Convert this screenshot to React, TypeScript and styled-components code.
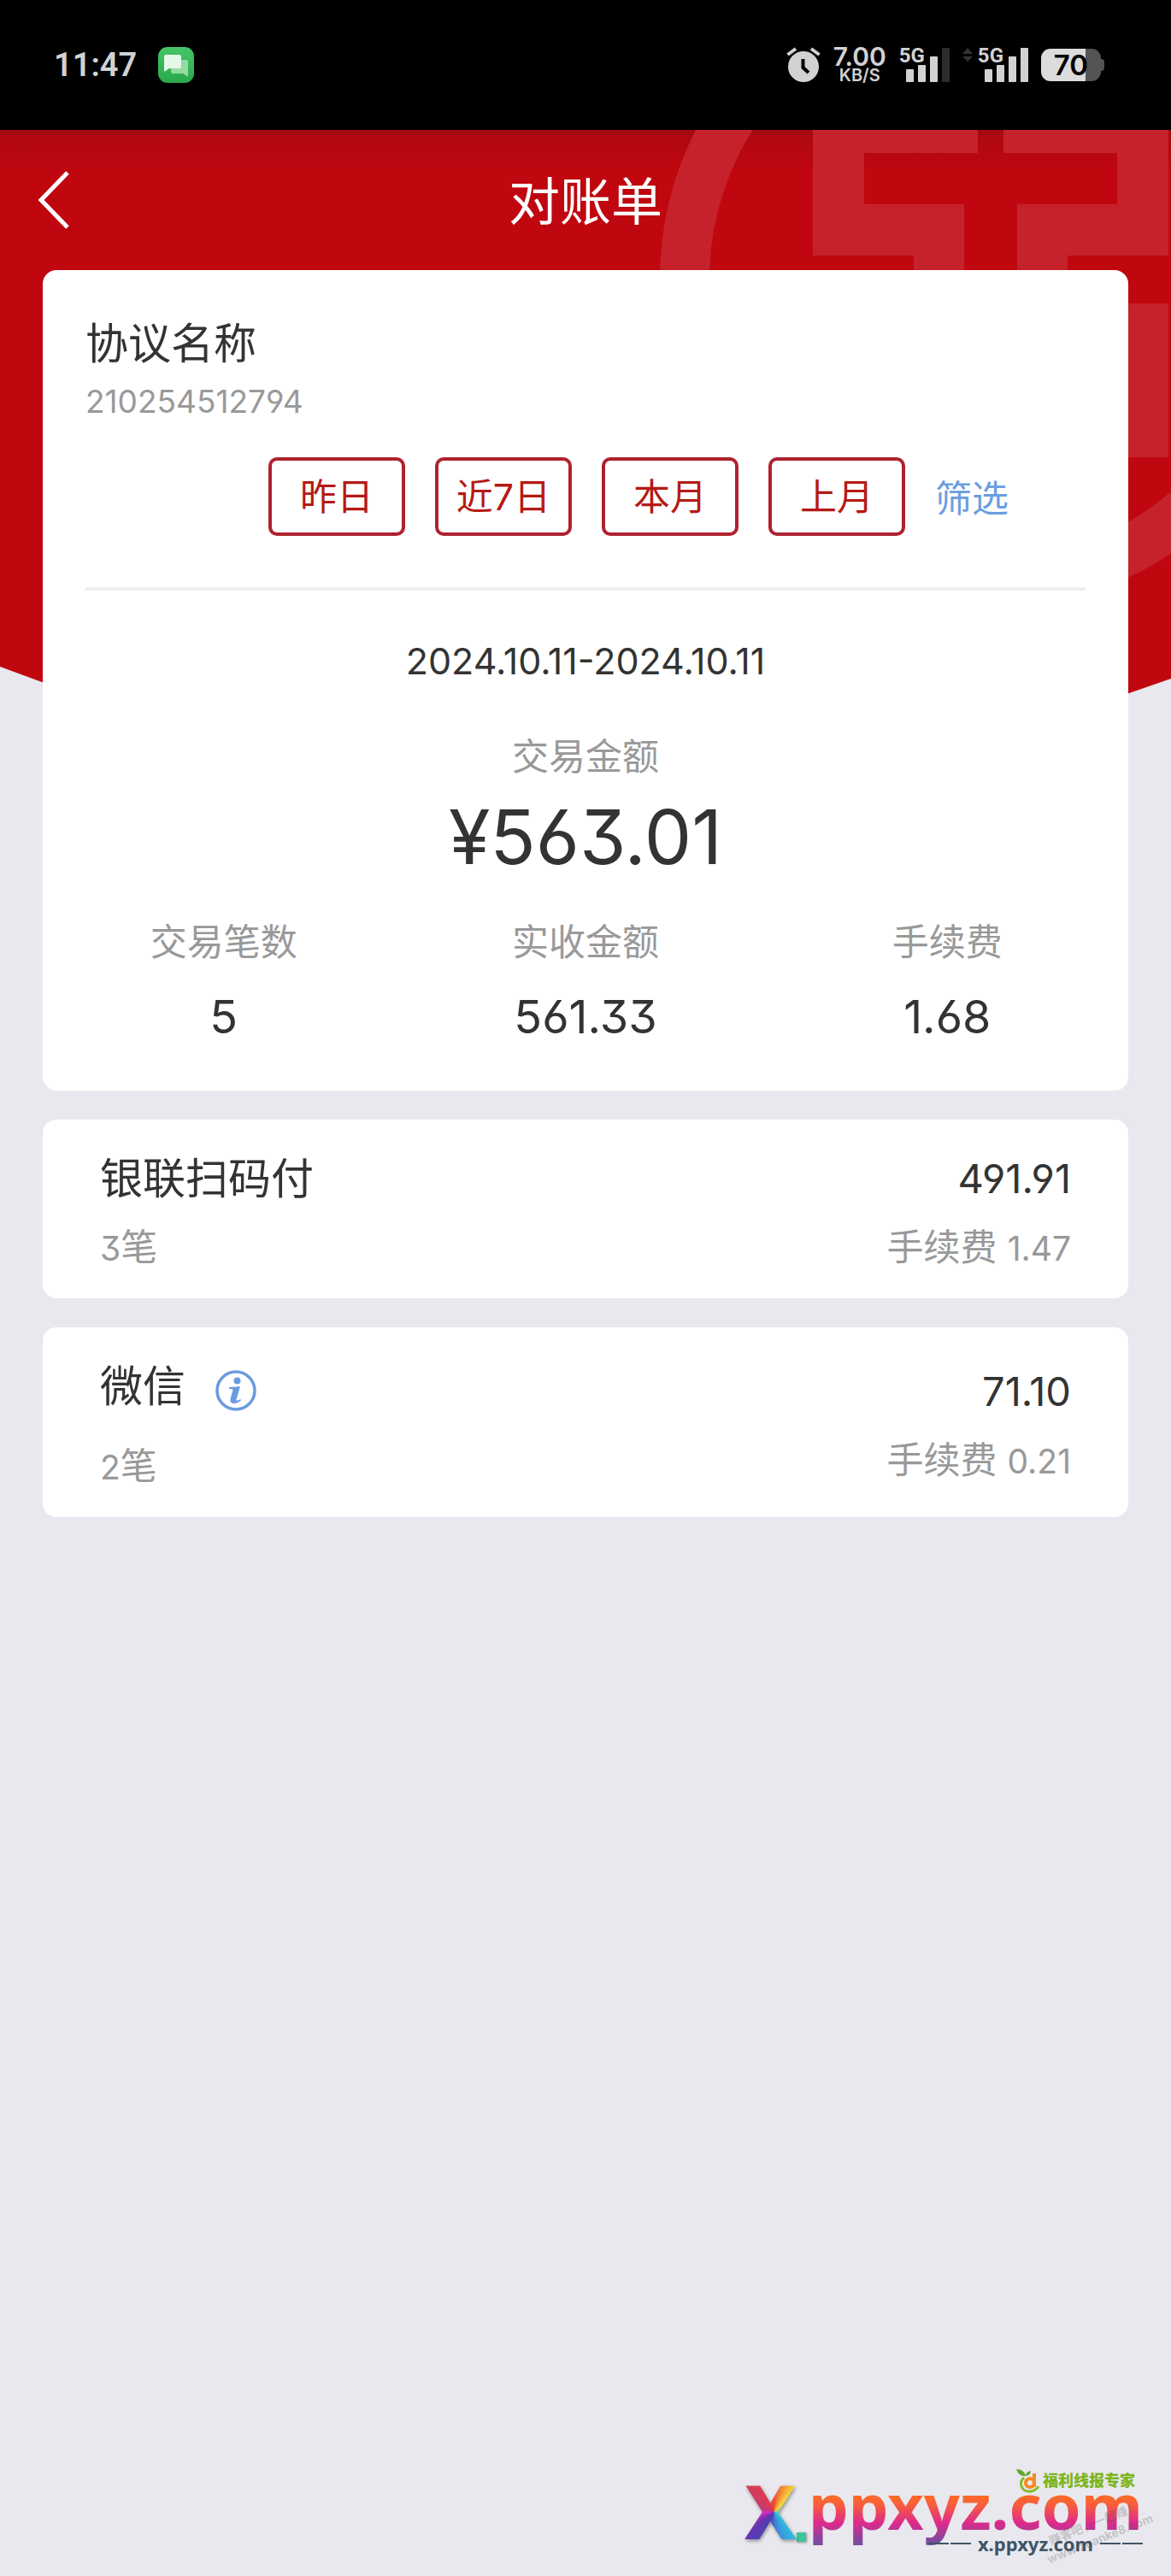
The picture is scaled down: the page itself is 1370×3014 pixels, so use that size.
import React from "react";
import styled, { createGlobalStyle } from "styled-components";

const GlobalStyle = createGlobalStyle`
  * { box-sizing: border-box; }
  body {
    margin: 0;
    background: #e9e8ee;
    color: #333;
    font-family: "Inter", "Noto Sans CJK SC", sans-serif;
    font-feature-settings: "cv03", "cv04", "cv09";
  }
  h1, h2, p { margin: 0; font-weight: 400; }
  button { margin: 0; padding: 0; font: inherit; font-feature-settings: inherit; cursor: pointer; }
`;

const Page = styled.div`
  position: relative;
  display: flex;
  flex-direction: column;
  min-height: 100vh;
  overflow: hidden;
`;

/* ---------- status bar ---------- */

const StatusBar = styled.header`
  display: flex;
  align-items: center;
  justify-content: space-between;
  height: 152px;
  padding: 0 78px 0 63px;
  background: #000;
  color: #d2d2d2;
`;

const StatusGroup = styled.div<{ $gap: number }>`
  display: flex;
  align-items: center;
  gap: ${(p) => p.$gap}px;
`;

const Clock = styled.time`
  font-size: 38px;
  line-height: 48px;
  font-weight: 600;
  font-family: "Roboto", sans-serif;
`;

const Speed = styled.div`
  display: flex;
  flex-direction: column;
  align-items: center;
  font-weight: 600;
`;

const SpeedValue = styled.span`
  font-size: 30px;
  line-height: 24px;
`;

const SpeedUnit = styled.span`
  font-size: 20px;
  line-height: 20px;
`;

const SignalBox = styled.div`
  display: flex;
  align-items: flex-start;
  height: 42px;
`;

const SignalLabel = styled.span`
  margin-right: -22px;
  font-size: 24px;
  line-height: 20px;
  font-weight: 700;
  font-family: "Roboto", sans-serif;
`;

const Battery = styled.div`
  display: flex;
  align-items: center;
`;

const BatteryBody = styled.div`
  width: 70px;
  height: 38px;
  border-radius: 11px;
  background: linear-gradient(90deg, #dcdcdc 74%, #545454 74%);
  color: #000;
  font-size: 33px;
  line-height: 38px;
  font-weight: 600;
  text-align: center;
`;

const BatteryTip = styled.div`
  width: 4px;
  height: 14px;
  border-radius: 0 4px 4px 0;
  background: #545454;
`;

/* ---------- page backdrop and title ---------- */

const Backdrop = styled.div`
  position: absolute;
  z-index: -1;
  top: 152px;
  left: 0;
  right: 0;
  height: 880px;
  overflow: hidden;
  background: linear-gradient(#a00c12 0, #b0080f 8px, #c00710 48px);
  clip-path: polygon(0 0, 100% 0, 100% 642px, 50% 880px, 0 628px);
`;

const Emblem = styled.svg`
  position: absolute;
  top: -210px;
  right: -172px;
`;

const NavBar = styled.nav`
  display: grid;
  grid-template-columns: 1fr auto 1fr;
  align-items: center;
  height: 164px;
  padding: 0 44px;
  color: #fff;
`;

const BackButton = styled.button`
  display: flex;
  justify-self: start;
  border: 0;
  background: none;
  color: inherit;
`;

const Title = styled.h1`
  padding-top: 4px;
  font-size: 60px;
  line-height: 80px;
`;

/* ---------- cards ---------- */

const Content = styled.main`
  display: flex;
  flex-direction: column;
  gap: 34px;
  padding: 0 50px;
`;

const Card = styled.section`
  border-radius: 16px;
  background: #fff;
`;

const SummaryCard = styled(Card)`
  padding: 56px 0;
`;

const Agreement = styled.div`
  display: flex;
  flex-direction: column;
  gap: 18px;
  padding: 0 50px;
`;

const Name = styled.h2`
  font-size: 50px;
  line-height: 60px;
`;

const AgreementNo = styled.p`
  color: #999;
  font-size: 37px;
  line-height: 40px;
`;

const Filters = styled.div`
  display: flex;
  align-items: center;
  justify-content: flex-end;
  gap: 35px;
  margin: 45px 50px 0;
  padding: 0 90px 60px 0;
  border-bottom: 4px solid #ededed;
`;

const RangeButton = styled.button`
  width: 160px;
  height: 92px;
  border: 4px solid #ae2230;
  border-radius: 10px;
  background: #fff;
  color: #b51a14;
  font-size: 43px;
  line-height: 60px;
`;

const FilterButton = styled.button`
  padding-top: 4px;
  border: 0;
  background: none;
  color: #6a9ee0;
  font-size: 43px;
  line-height: 60px;
`;

const Period = styled.p`
  margin: 57px 0;
  font-size: 43px;
  line-height: 50px;
  text-align: center;
`;

const Label = styled.p`
  color: #999;
  font-size: 43px;
  line-height: 60px;
`;

const Digits = styled.span`
  font-size: 39px;
  line-height: 40px;
`;

const Total = styled.div`
  text-align: center;
`;

const TotalValue = styled.p`
  margin: 14px 0 43px;
  font-size: 88px;
  line-height: 100px;
`;

const Stats = styled.div`
  display: grid;
  grid-template-columns: repeat(3, 1fr);
  text-align: center;
`;

const StatValue = styled.p`
  margin-top: 28px;
  font-size: 54px;
  line-height: 60px;
`;

const ChannelCard = styled(Card)`
  display: flex;
  justify-content: space-between;
  padding: 39px 67px 30px;
`;

const Column = styled.div<{ $gap: number; $top?: number; $end?: boolean }>`
  display: flex;
  flex-direction: column;
  align-items: ${(p) => (p.$end ? "flex-end" : "flex-start")};
  gap: ${(p) => p.$gap}px;
  padding-top: ${(p) => p.$top ?? 0}px;
`;

const NameRow = styled.div`
  display: flex;
  align-items: center;
  gap: 35px;
`;

const InfoButton = styled.button`
  display: flex;
  padding-top: 10px;
  border: 0;
  background: none;
`;

const Amount = styled.p`
  font-size: 47px;
  line-height: 60px;
`;

/* ---------- site mark ---------- */

const Footer = styled.footer`
  display: flex;
  justify-content: flex-end;
  margin-top: auto;
  padding: 0 33px 26px 0;
`;

const SiteMark = styled.div`
  position: relative;
  display: flex;
  flex-direction: column;
  align-items: flex-end;
`;

const Brand = styled.div`
  display: flex;
  align-items: center;
  gap: 3px;
  padding-right: 9px;
  color: #7db51c;
  font-size: 18px;
  line-height: 30px;
  font-weight: 900;
`;

const Wordmark = styled.div`
  display: flex;
  align-items: flex-end;
  height: 64px;
  margin-bottom: -18px;
  font-family: "Noto Sans", sans-serif;
  font-weight: 700;
`;

const BigX = styled.span`
  background: conic-gradient(from 0deg at 57% 52%, #ef4a2c, #f6d13c 40deg, #28d0d8 125deg, #3a9be0 160deg, #4b3fb4 205deg, #6a35b0 235deg, #d828c4 262deg, #c83a6a 290deg, #dc3c50 330deg, #ef4a2c);
  background-clip: text;
  -webkit-background-clip: text;
  color: transparent;
  font-size: 88px;
  line-height: 90px;
  font-weight: 800;
  filter: drop-shadow(1px 2px 2px #0006);
`;

const Dot = styled.span`
  width: 11px;
  height: 11px;
  margin: 0 3px 8px 0;
  background: #3cc796;
  box-shadow: 1px 1px 3px #0006;
`;

const Domain = styled.span`
  background: linear-gradient(#fb6f20 34%, #f95f38 48%, #dd2a8c 70%, #7a4a9e 92%);
  background-clip: text;
  -webkit-background-clip: text;
  color: transparent;
  font-size: 74px;
  line-height: 100px;
`;

const SubDomain = styled.div`
  position: relative;
  display: flex;
  align-items: center;
  gap: 8px;
  color: #3e5566;
  font-family: "Noto Sans", sans-serif;
  font-size: 22px;
  line-height: 24px;
  font-weight: 700;
`;

const Dash = styled.span`
  width: 24px;
  height: 2px;
  background: #3e5566;
`;

const Dashes = styled.span`
  display: flex;
  gap: 2px;
`;

const Stamp = styled.div`
  position: absolute;
  right: -12px;
  bottom: 8px;
  color: #50505040;
  font-size: 14px;
  line-height: 19px;
  font-weight: 700;
  text-align: center;
  white-space: nowrap;
  transform: rotate(-22deg);
`;

const AlarmIcon = () => (
  <svg width="40" height="42" viewBox="0 0 40 42" aria-hidden="true">
    <circle cx="20" cy="23" r="18" fill="#d2d2d2" />
    <path d="M1.500 9L11 2M38.500 9L29 2" stroke="#d2d2d2" strokeWidth="4" />
    <path d="M19.500 14v10l6.500 6" fill="none" stroke="#000" strokeWidth="4" />
  </svg>
);

const MessageIcon = () => (
  <svg width="42" height="42" viewBox="0 0 42 42" aria-hidden="true">
    <defs>
      <linearGradient id="msg" x1="0" y1="0" x2="0" y2="1">
        <stop offset="0" stopColor="#45c566" />
        <stop offset="1" stopColor="#28a84a" />
      </linearGradient>
    </defs>
    <rect width="42" height="42" rx="11" fill="url(#msg)" />
    <path d="M17 15h16q2 0 2 2v18l-6-4H17q-2 0-2-2V17q0-2 2-2z" fill="#93dba3" />
    <path d="M9 9h16q2 0 2 2v12q0 2-2 2H13l-6 4V11q0-2 2-2z" fill="#e4f8e8" />
  </svg>
);

function Signal({ bars, active }: { bars: number; active?: boolean }) {
  return (
    <SignalBox>
      {active && (
        <svg width="18" height="20" viewBox="0 0 18 20" aria-hidden="true">
          <path d="M0 8l6-7 6 7zM0 11l6 6 6-6z" fill="#333" />
        </svg>
      )}
      <SignalLabel>5G</SignalLabel>
      <svg width="51" height="42" viewBox="0 0 51 42" aria-hidden="true">
        {[26, 21, 11, 1].map((top, i) => (
          <rect key={top} x={i * 14} y={top} width="9" height={41 - top} rx="1" fill={i < bars ? "#d2d2d2" : "#2c2c2c"} />
        ))}
      </svg>
    </SignalBox>
  );
}

const BankEmblem = () => (
  <Emblem width="770" height="770" viewBox="-385 -385 770 770" fill="#c6222b" aria-hidden="true">
    <circle r="356" fill="none" stroke="#c6222b" strokeWidth="58" />
    <g transform="translate(2 0)">
      {["scale(1 1)", "scale(-1 1)", "scale(1 -1)", "scale(-1 -1)"].map((transform) => (
        <path key={transform} transform={transform} d="M15-208H208V-28H90V29H31V-88H148V-148H15z" />
      ))}
    </g>
  </Emblem>
);

const InfoIcon = () => (
  <svg width="48" height="48" viewBox="0 0 48 48" aria-hidden="true">
    <circle cx="24" cy="24" r="22" fill="none" stroke="#6b9be0" strokeWidth="3.500" />
    <circle cx="25.500" cy="12.500" r="4" fill="#6b9be0" />
    <path d="M16 20q6 0 13-1l-4.500 16q0 2 5-1v2q-5 4-9 3-4-1-3-5l3-11q0-1-4.500-1z" fill="#6b9be0" />
  </svg>
);

const FruitIcon = () => (
  <svg width="28" height="30" viewBox="0 0 28 30" aria-hidden="true">
    <path d="M0 1q9 0 11 8-8 1-11-8zM11 9q0-5 6-6 0 5-6 6z" fill="#5fa82a" />
    <path d="M9 11q-5 4-3 10 3 7 11 6 6-1 9-6" fill="none" stroke="#86bd2c" strokeWidth="3" />
    <circle cx="16" cy="17" r="5" fill="none" stroke="#f68a1e" strokeWidth="4" />
    <path d="M21 6v16" stroke="#f68a1e" strokeWidth="4" />
  </svg>
);

const ranges = ["昨日", "近7日", "本月", "上月"];

const stats = [
  { label: "交易笔数", value: "5" },
  { label: "实收金额", value: "561.33" },
  { label: "手续费", value: "1.68" },
];

export default function App() {
  return (
    <>
      <GlobalStyle />
      <Page>
        <StatusBar>
          <StatusGroup $gap={25}>
            <Clock>11:47</Clock>
            <MessageIcon />
          </StatusGroup>
          <StatusGroup $gap={15}>
            <AlarmIcon />
            <Speed>
              <SpeedValue>7.00</SpeedValue>
              <SpeedUnit>KB/S</SpeedUnit>
            </Speed>
            <Signal bars={3} />
            <Signal bars={4} active />
            <Battery>
              <BatteryBody>70</BatteryBody>
              <BatteryTip />
            </Battery>
          </StatusGroup>
        </StatusBar>

        <Backdrop>
          <BankEmblem />
        </Backdrop>

        <NavBar>
          <BackButton aria-label="返回">
            <svg width="38" height="70" viewBox="0 0 38 70" fill="none" aria-hidden="true">
              <path d="M35 3L4 35l31 32" stroke="#fff" strokeWidth="5" />
            </svg>
          </BackButton>
          <Title>对账单</Title>
        </NavBar>

        <Content>
          <SummaryCard>
            <Agreement>
              <Name>协议名称</Name>
              <AgreementNo>210254512794</AgreementNo>
            </Agreement>
            <Filters>
              {ranges.map((range) => (
                <RangeButton key={range}>{range}</RangeButton>
              ))}
              <FilterButton>筛选</FilterButton>
            </Filters>
            <Period>2024.10.11-2024.10.11</Period>
            <Total>
              <Label>交易金额</Label>
              <TotalValue>¥563.01</TotalValue>
            </Total>
            <Stats>
              {stats.map((stat) => (
                <div key={stat.label}>
                  <Label>{stat.label}</Label>
                  <StatValue>{stat.value}</StatValue>
                </div>
              ))}
            </Stats>
          </SummaryCard>

          <ChannelCard>
            <Column $gap={20}>
              <Name>银联扫码付</Name>
              <Label>
                <Digits>3</Digits>笔
              </Label>
            </Column>
            <Column $gap={20} $end>
              <Amount>491.91</Amount>
              <Label>
                手续费 <Digits>1.47</Digits>
              </Label>
            </Column>
          </ChannelCard>

          <ChannelCard>
            <Column $gap={33}>
              <NameRow>
                <Name>微信</Name>
                <InfoButton aria-label="说明">
                  <InfoIcon />
                </InfoButton>
              </NameRow>
              <Label>
                <Digits>2</Digits>笔
              </Label>
            </Column>
            <Column $gap={20} $top={6} $end>
              <Amount>71.10</Amount>
              <Label>
                手续费 <Digits>0.21</Digits>
              </Label>
            </Column>
          </ChannelCard>
        </Content>

        <Footer>
          <SiteMark>
            <Brand>
              <FruitIcon />
              福利线报专家
            </Brand>
            <Wordmark>
              <BigX>X</BigX>
              <Dot />
              <Domain>ppxyz.com</Domain>
            </Wordmark>
            <SubDomain>
              <Dashes>
                <Dash />
                <Dash />
              </Dashes>
              x.ppxyz.com
              <Dashes>
                <Dash />
                <Dash />
              </Dashes>
            </SubDomain>
            <Stamp>
              赚客吧，一起赚！
              <br />
              www.zuanke8.com
            </Stamp>
          </SiteMark>
        </Footer>
      </Page>
    </>
  );
}
